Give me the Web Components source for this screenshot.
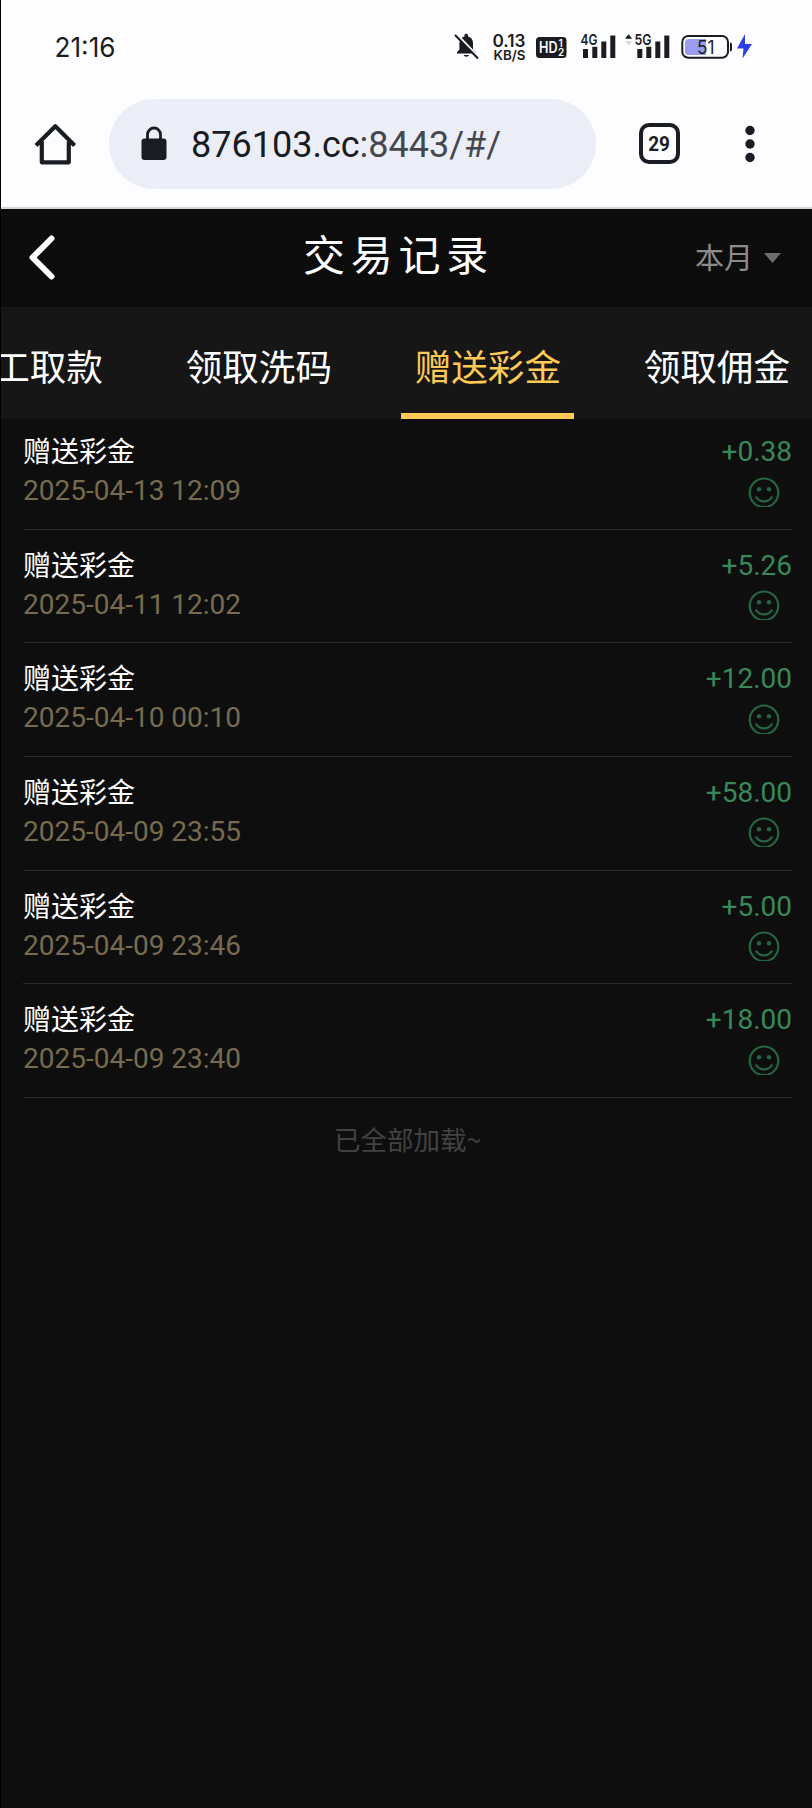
<!DOCTYPE html>
<html lang="zh-CN">
<head>
<meta charset="utf-8">
<meta name="viewport" content="width=device-width, initial-scale=1">
<title>交易记录</title>
<style>
    body {
        margin: 0;
        background: #0e0e0e;
        font-family: Roboto, "Noto Sans CJK SC", sans-serif;
        overflow: hidden;
    }
</style>
</head>
<body>
<phone-screen>
    <status-bar slot="top" time="21:16"></status-bar>
    <browser-bar slot="top" host="876103.cc" path=":8443/#/" tabs="29"></browser-bar>
    <page-header period="本月">交易记录</page-header>
    <tab-strip>
        <tab-item>工取款</tab-item>
        <tab-item>领取洗码</tab-item>
        <tab-item active>赠送彩金</tab-item>
        <tab-item>领取佣金</tab-item>
    </tab-strip>
    <record-list>
        <record-item date="2025-04-13 12:09" amount="+0.38">赠送彩金</record-item>
        <record-item date="2025-04-11 12:02" amount="+5.26">赠送彩金</record-item>
        <record-item date="2025-04-10 00:10" amount="+12.00">赠送彩金</record-item>
        <record-item date="2025-04-09 23:55" amount="+58.00">赠送彩金</record-item>
        <record-item date="2025-04-09 23:46" amount="+5.00">赠送彩金</record-item>
        <record-item date="2025-04-09 23:40" amount="+18.00">赠送彩金</record-item>
        <span slot="footer">已全部加载~</span>
    </record-list>
</phone-screen>

<script>
class PhoneScreen extends HTMLElement {
    constructor() {
        super();
        this.attachShadow({ mode: 'open' });
        this.shadowRoot.innerHTML = `
        <style>
            :host {
                display: flex;
                flex-direction: column;
                box-sizing: border-box;
                width: 812px;
                height: 1808px;
                border-left: 1px solid #000;
                background: #0e0e0e;
                overflow: hidden;
            }

            #chrome {
                height: 209px;
                box-sizing: border-box;
                border-bottom: 2px solid #d4d4da;
                background: #fdfdff;
            }
        </style>
        <div id="chrome"><slot name="top"></slot></div>
        <slot></slot>
        `;
    }
}

class StatusBar extends HTMLElement {
    constructor() {
        super();
        this.attachShadow({ mode: 'open' });
        this.shadowRoot.innerHTML = `
        <style>
            :host {
                display: flex;
                justify-content: space-between;
                height: 80px;
                padding-top: 20px;
                box-sizing: border-box;
                color: #1b1c1f;
            }

            svg {
                display: block;
                font-family: Inter, Roboto, sans-serif;
            }
        </style>
        <svg width="160" height="60" fill="currentColor">
            <text x="53.5" y="36.8" font-size="26.5" textLength="61" lengthAdjust="spacingAndGlyphs">${this.getAttribute('time')}</text>
        </svg>
        <svg width="372" height="60" viewBox="440 0 372 60" fill="currentColor">
            <!-- muted bell -->
            <path d="M457 33.5v-1.2l2.4-2.7v-6.3c0-3.6 2-6 5-6.7v-1.1c0-2.3 3.6-2.3 3.6 0v1.1c3 .7 5 3.1 5 6.7v6.3l2.7 2.7v1.2zM463.8 35h5.2c-.4 2.3-4.8 2.3-5.2 0z"/>
            <path d="M456.5 14.5l22 23" stroke="#fdfdff" stroke-width="3"/>
            <path d="M455 15l23 23.5" stroke="currentColor" stroke-width="2"/>
            <!-- network speed -->
            <text x="492.5" y="27.3" font-size="17" font-weight="600" textLength="33" lengthAdjust="spacingAndGlyphs">0.13</text>
            <text x="493.5" y="40.3" font-size="13.5" font-weight="600" textLength="32" lengthAdjust="spacingAndGlyphs">KB/S</text>
            <!-- HD voice -->
            <rect x="536" y="17" width="30.5" height="21" rx="3.5"/>
            <g fill="#fdfdff" font-weight="600">
                <text x="539" y="33.3" font-size="16" textLength="18.5" lengthAdjust="spacingAndGlyphs">HD</text>
                <text x="558.5" y="26.5" font-size="10">1</text>
                <text x="558" y="36" font-size="10">2</text>
            </g>
            <!-- signals -->
            <text x="580.5" y="25.3" font-size="15" font-weight="600" textLength="17" lengthAdjust="spacingAndGlyphs">4G</text>
            <path d="M583 29h5v9h-5zM592.3 26.8h5v11.2h-5zM601.3 21.5h5v16.5h-5zM610.3 15.5h5v22.5h-5z"/>
            <path d="M625 18.8l3.6-4.6 3.6 4.6z"/>
            <path d="M625 21l3.6 4.2 3.6-4.2z" fill="#d9d9dc"/>
            <text x="634.5" y="25.3" font-size="15" font-weight="600" textLength="17" lengthAdjust="spacingAndGlyphs">5G</text>
            <path d="M637.3 29h5v9h-5zM646.3 26.8h5v11.2h-5zM655.3 21.5h5v16.5h-5zM664.3 15.5h5v22.5h-5z"/>
            <!-- battery -->
            <rect x="682.3" y="16" width="45.7" height="21.8" rx="6" fill="none" stroke="currentColor" stroke-width="2"/>
            <path d="M688.5 19h17.5v16h-17.5q-3.5 0-3.5-3.500v-9q0-3.500 3.500-3.500z" fill="#9a9cf0"/>
            <path d="M730 22.5q2 0 2 2v5q0 2-2 2z"/>
            <text x="697" y="33.5" font-size="18" textLength="17.5" lengthAdjust="spacingAndGlyphs">51</text>
            <path d="M745 14l-8 14.5h6.5l-1 10 9.500-14.500h-7z" fill="#2b3fe6"/>
        </svg>
        `;
    }
}

class BrowserBar extends HTMLElement {
    constructor() {
        super();
        this.attachShadow({ mode: 'open' });
        this.shadowRoot.innerHTML = `
        <style>
            :host {
                display: flex;
                align-items: center;
                height: 127px;
                box-sizing: border-box;
                padding: 0 47px 0 32px;
                color: #191c22;
            }

            svg {
                display: block;
                flex: none;
            }

            #address {
                display: flex;
                align-items: center;
                box-sizing: border-box;
                width: 487px;
                height: 90px;
                margin: 0 43px 0 32px;
                padding-left: 31px;
                border-radius: 45px;
                background: #ebeef6;
            }

            #url {
                margin: 2px 0 0 23px;
                font-size: 36px;
                line-height: 44px;
                white-space: nowrap;
            }

            #path {
                color: #45474d;
            }

            #count {
                display: flex;
                align-items: center;
                justify-content: center;
                box-sizing: border-box;
                width: 41px;
                height: 41px;
                border: 4.5px solid;
                border-radius: 10px;
                font-size: 21px;
                font-weight: 700;
            }

            #count span {
                transform: scaleX(0.9);
            }

            #menu {
                margin-left: auto;
            }
        </style>
        <svg width="44" height="44" viewBox="0 0 44 44" fill="none" stroke="currentColor" stroke-width="4.2" stroke-linejoin="round">
            <path d="M3 23.500L22.300 4.300 41.600 23.500M8.800 19.500v20.800h27V19.500"/>
        </svg>
        <div id="address">
            <svg width="28" height="36" viewBox="0 0 28 36">
                <rect x="1.5" y="12.5" width="25" height="21.5" rx="3" fill="currentColor"/>
                <path d="M7.500 14V8.500a6.500 6.500 0 0 1 13 0V14" fill="none" stroke="currentColor" stroke-width="2.8"/>
            </svg>
            <div id="url"><span>${this.getAttribute('host')}</span><span id="path">${this.getAttribute('path')}</span></div>
        </div>
        <div id="count"><span>${this.getAttribute('tabs')}</span></div>
        <svg id="menu" width="30" height="40" viewBox="0 0 30 40" fill="currentColor">
            <circle cx="15" cy="6.5" r="4.7"/>
            <circle cx="15" cy="20" r="4.7"/>
            <circle cx="15" cy="33.5" r="4.7"/>
        </svg>
        `;
    }
}

class PageHeader extends HTMLElement {
    constructor() {
        super();
        this.attachShadow({ mode: 'open' });
        this.shadowRoot.innerHTML = `
        <style>
            :host {
                display: grid;
                grid-template-columns: 1fr auto 1fr;
                align-items: center;
                height: 98px;
                flex: none;
                padding: 0 31px 0 27px;
                color: #fff;
                background: #0c0c0c;
            }

            h1 {
                margin: 0 12px 2px 0;
                font-size: 42px;
                font-weight: 400;
                line-height: 60px;
                letter-spacing: 5.7px;
            }

            #period {
                display: flex;
                align-items: center;
                justify-content: flex-end;
                gap: 11px;
                color: #8c8c8c;
                font-size: 29px;
            }

            #period span {
                margin-bottom: 4px;
            }
        </style>
        <svg width="28" height="46" viewBox="0 0 28 46" fill="none" stroke="currentColor" stroke-width="6" stroke-linecap="round" stroke-linejoin="round">
            <path d="M23.500 3.500L4.500 22.500l19 19"/>
        </svg>
        <h1><slot></slot></h1>
        <div id="period">
            <span>${this.getAttribute('period')}</span>
            <svg width="17" height="10" viewBox="0 0 17 10"><path d="M0 0h17L8.500 10z" fill="#6c6c6c"/></svg>
        </div>
        `;
    }
}

class TabStrip extends HTMLElement {
    constructor() {
        super();
        this.attachShadow({ mode: 'open' });
        this.shadowRoot.innerHTML = `
        <style>
            :host {
                display: flex;
                justify-content: flex-end;
                gap: 55.7px;
                height: 112px;
                flex: none;
                padding-right: 8.5px;
                background: #161616;
                overflow: hidden;
            }
        </style>
        <slot></slot>
        `;
    }
}

class TabItem extends HTMLElement {
    constructor() {
        super();
        this.attachShadow({ mode: 'open' });
        this.shadowRoot.innerHTML = `
        <style>
            :host {
                display: flex;
                flex: none;
                justify-content: center;
                align-items: center;
                box-sizing: border-box;
                padding: 10px 13.5px 0;
                border-bottom: 6px solid transparent;
                color: #fff;
                font-size: 36.6px;
                white-space: nowrap;
            }

            :host([active]) {
                color: #fec955;
                border-bottom-color: #fec955;
            }
        </style>
        <slot></slot>
        `;
    }
}

class RecordList extends HTMLElement {
    constructor() {
        super();
        this.attachShadow({ mode: 'open' });
        this.shadowRoot.innerHTML = `
        <style>
            :host {
                display: block;
                margin-top: -3px;
                padding: 0 20px 0 22px;
            }

            #footer {
                padding-top: 21px;
                color: #424242;
                font-family: "Noto Sans CJK SC", sans-serif;
                font-size: 26.5px;
                line-height: 40px;
                text-align: center;
            }
        </style>
        <slot></slot>
        <div id="footer"><slot name="footer"></slot></div>
        `;
        this.style.fontFamily = 'Roboto, "Noto Sans CJK SC", sans-serif';
    }
}

class RecordItem extends HTMLElement {
    constructor() {
        super();
        this.attachShadow({ mode: 'open' });
        this.shadowRoot.innerHTML = `
        <style>
            :host {
                display: flex;
                justify-content: space-between;
                box-sizing: border-box;
                height: 113.66px;
                padding-top: 16px;
                border-bottom: 1px solid #282828;
                font-size: 28px;
                line-height: 40px;
            }

            #title {
                padding-top: 1px;
                color: #fff;
            }

            #date {
                margin-top: -2px;
                color: #766b4e;
            }

            #right {
                display: flex;
                flex-direction: column;
                align-items: flex-end;
                color: #38885a;
            }

            svg {
                display: block;
                margin: 4.5px 12px 0 0;
                color: #266542;
            }
        </style>
        <div>
            <div id="title"><slot></slot></div>
            <div id="date">${this.getAttribute('date')}</div>
        </div>
        <div id="right">
            <div>${this.getAttribute('amount')}</div>
            <svg width="32" height="30" viewBox="0 0 32 30" fill="none" stroke="currentColor" stroke-width="2.2">
                <circle cx="16" cy="15.8" r="14.3"/>
                <path d="M7.800 19.500c3.200 6.500 13.200 6.500 16.400 0"/>
                <circle cx="11" cy="12.3" r="2.2" fill="currentColor" stroke="none"/>
                <circle cx="21" cy="12.3" r="2.2" fill="currentColor" stroke="none"/>
            </svg>
        </div>
        `;
    }
}

customElements.define('phone-screen', PhoneScreen);
customElements.define('status-bar', StatusBar);
customElements.define('browser-bar', BrowserBar);
customElements.define('page-header', PageHeader);
customElements.define('tab-strip', TabStrip);
customElements.define('tab-item', TabItem);
customElements.define('record-list', RecordList);
customElements.define('record-item', RecordItem);
</script>
</body>
</html>
